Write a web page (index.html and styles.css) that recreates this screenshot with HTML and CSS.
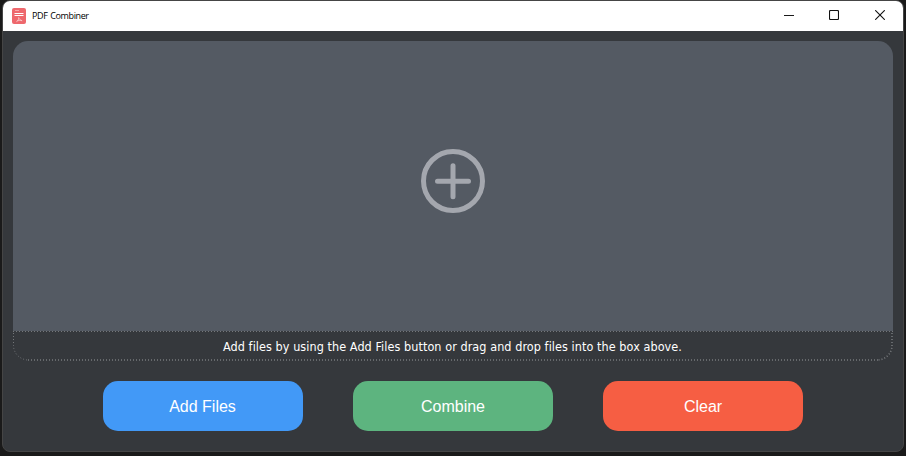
FILE: index.html
```
<!DOCTYPE html>
<html lang="en">
<head>
<meta charset="utf-8">
<title>PDF Combiner</title>
<link rel="stylesheet" href="styles.css">
</head>
<body>
<div class="window">
  <header class="titlebar">
    <svg class="app-icon" width="14" height="16" viewBox="0 0 14 16">
      <rect width="14" height="16" rx="2" fill="#ee686d"/>
      <path d="M3 2.500h4" stroke="#f6a9ac"/>
      <path d="M2.500 5.500h9M2.500 7.500h9" stroke="#fff"/>
      <path d="M6.600 9.500c.6 1.800 1.800 2.800 3.600 3.200M6.800 9.500c0 1.800-.8 3.300-2.400 4.200M4.800 13.200c1.500-.8 3.300-1 5.200-.5" fill="none" stroke="#fbd5d6" stroke-width=".7"/>
    </svg>
    <h1 class="title">PDF Combiner</h1>
    <div class="controls">
      <svg width="10" height="10"><path d="M0 5.500h10" stroke="#1a1a1a"/></svg>
      <svg width="10" height="10"><rect x=".5" y=".5" width="9" height="9" rx="1" fill="none" stroke="#111" stroke-width="1.100"/></svg>
      <svg width="10" height="10"><path d="M.2 .2L9.800 9.800M9.800 .2L.2 9.800" stroke="#111" stroke-width="1.100"/></svg>
    </div>
  </header>
  <main class="content">
    <section class="dropzone">
      <svg width="64" height="64" viewBox="0 0 64 64" fill="none" stroke="#a4a7ae" stroke-width="5" stroke-linecap="round">
        <circle cx="32" cy="32" r="29.500"/>
        <path d="M32 16.800v31M16.500 32.300h31"/>
      </svg>
    </section>
    <div class="hint">
      <svg class="outline" width="880" height="30" fill="none" stroke="#74777a" stroke-dasharray="1 2">
        <path d="M0 .5h880"/>
        <path d="M.5 2v12.500a15 14.500 0 0 0 14.500 14.500"/>
        <path d="M15 29h850" stroke-width="2" stroke="#66696c"/>
        <path d="M879 2v12.500a15 14.500 0 0 1-14 14.500" stroke-width="1.600"/>
      </svg>
      <p>Add files by using the Add Files button or drag and drop files into the box above.</p>
    </div>
    <div class="actions">
      <button class="btn add">Add Files</button>
      <button class="btn combine">Combine</button>
      <button class="btn clear">Clear</button>
    </div>
  </main>
</div>
</body>
</html>
```
FILE: styles.css
```
* { box-sizing: border-box; }
body {
  margin: 0;
  height: 456px;
  padding: 0 1px 4px 2px;
  background: #1a1a1a;
  overflow: hidden;
}
.window {
  width: 902px;
  height: 452px;
  border: 1px solid #454545;
  border-radius: 8px;
  background: #35383c;
  overflow: hidden;
}
.titlebar {
  height: 30px;
  background: #fff;
  display: flex;
  align-items: center;
  padding: 0 18px 0 9px;
}
.title {
  margin: -1px auto 0 6px;
  font: 400 9px "Open Sans", sans-serif;
  letter-spacing: -0.4px;
  word-spacing: 1px;
  color: #000;
}
.controls {
  display: grid;
  grid-template-columns: 45px 46px 10px;
  margin-top: -2px;
}
.controls svg { display: block; }
.content { padding: 10px 10px 0; }
.dropzone {
  height: 290px;
  width: 880px;
  border-radius: 15px 15px 0 0;
  background: #545a63;
  display: flex;
  justify-content: center;
  padding-top: 108px;
}
.hint {
  position: relative;
  width: 880px;
  height: 30px;
  display: flex;
  align-items: center;
  justify-content: center;
}
.hint p {
  margin: 0 1px 0 0;
  font: 12.5px "DejaVu Sans Condensed", "DejaVu Sans", sans-serif;
  font-stretch: condensed;
  letter-spacing: 0.07px;
  color: #fff;
  white-space: nowrap;
}
.outline { position: absolute; inset: 0; }
.actions {
  display: flex;
  gap: 50px;
  width: 880px;
  justify-content: center;
  margin-top: 20px;
}
.btn {
  width: 200px;
  height: 50px;
  border: 0;
  border-radius: 15px;
  padding: 1px 0 0;
  color: #fff;
  font: 16px "Liberation Sans", Arial, sans-serif;
}
.add { background: #4299f7; padding-right: 1px; }
.combine { background: #5db47f; }
.clear { background: #f65e43; }
```
